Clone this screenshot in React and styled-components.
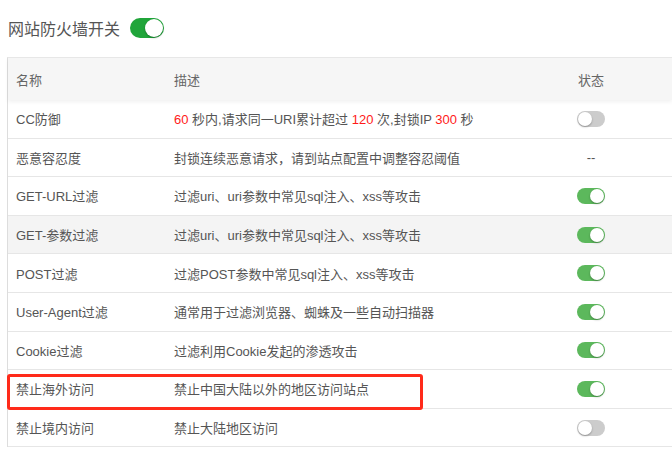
import styled, { createGlobalStyle } from 'styled-components';

const GlobalStyle = createGlobalStyle`
  html, body {
    margin: 0;
    padding: 0;
    background: #fff;
    overflow: hidden;
  }
  body {
    font-family: "Liberation Sans", "Noto Sans CJK SC", sans-serif;
    color: #555;
  }
`;

const rows = [
  { name: 'CC防御', desc: 'cc', on: false },
  { name: '恶意容忍度', desc: '封锁连续恶意请求，请到站点配置中调整容忍阈值', on: null },
  { name: 'GET-URL过滤', desc: '过滤uri、uri参数中常见sql注入、xss等攻击', on: true },
  { name: 'GET-参数过滤', desc: '过滤uri、uri参数中常见sql注入、xss等攻击', on: true, hover: true },
  { name: 'POST过滤', desc: '过滤POST参数中常见sql注入、xss等攻击', on: true },
  { name: 'User-Agent过滤', desc: '通常用于过滤浏览器、蜘蛛及一些自动扫描器', on: true },
  { name: 'Cookie过滤', desc: '过滤利用Cookie发起的渗透攻击', on: true },
  { name: '禁止海外访问', desc: '禁止中国大陆以外的地区访问站点', on: true, marked: true },
  { name: '禁止境内访问', desc: '禁止大陆地区访问', on: false },
];

export default function App(){
  return (
    <>
      <GlobalStyle />
      <Page>
        <TitleBar>
          <span>网站防火墙开关</span>
          <Switch $on $big />
        </TitleBar>
        <Table>
          <HeadRow>
            <NameCell>名称</NameCell>
            <DescCell>描述</DescCell>
            <StatusCell>状态</StatusCell>
            <Rest />
          </HeadRow>
          {rows.map((row) => (
            <Row key={row.name} $hover={row.hover}>
              <NameCell>{row.name}</NameCell>
              <DescCell>
                {row.desc === 'cc' ? (
                  <>
                    <Red>60</Red> 秒内,请求同一URI累计超过 <Red>120</Red> 次,封锁IP <Red>300</Red> 秒
                  </>
                ) : row.desc}
              </DescCell>
              <StatusCell>
                {row.on === null ? <Dash>--</Dash> : <Switch $on={row.on} />}
              </StatusCell>
              <Rest />
              {row.marked && <Mark />}
            </Row>
          ))}
        </Table>
      </Page>
    </>
  );
}

const Page = styled.div`
  padding: 0 0 0 7px;
  width: 665px;
`

const TitleBar = styled.div`
  display: flex;
  align-items: center;
  gap: 10px;
  height: 57px;
  padding-left: 1px;
  box-sizing: border-box;
  font-size: 16px;
  color: #555;
  position: relative;
  top: -1px;
`

const Table = styled.div`
  border-left: 1px solid #ddd;
  border-top: 1px solid #e8e8e8;
  font-size: 13px;
`

const HeadRow = styled.div`
  display: flex;
  align-items: center;
  height: 42px;
  background: #f6f6f6;
  color: #666;
  box-shadow: 0 2px 4px rgba(0,0,0,0.06);
  position: relative;
  z-index: 1;
`

const Row = styled.div`
  display: flex;
  align-items: center;
  height: 37.6px;
  border-bottom: 1px solid #e6e6e6;
  background: ${p => p.$hover ? '#f4f4f4' : '#fff'};
  position: relative;
`

const NameCell = styled.div`
  width: 158px;
  padding-left: 8px;
  flex-shrink: 0;
  white-space: nowrap;
`

const DescCell = styled.div`
  width: 371px;
  flex-shrink: 0;
  white-space: nowrap;
`

const StatusCell = styled.div`
  width: 92px;
  flex-shrink: 0;
  display: flex;
  justify-content: center;
`

const Rest = styled.div`
  flex: 1;
`

const Red = styled.span`
  color: #ff1a1a;
`

const Dash = styled.span`
  color: #555;
`

const Switch = styled.span`
  display: inline-block;
  position: relative;
  width: ${p => p.$big ? '34px' : '28px'};
  height: ${p => p.$big ? '20px' : '16px'};
  border-radius: 10px;
  background: ${p => p.$on ? (p.$big ? '#20a53a' : '#5cb85c') : '#ccc'};

  &::after{
    content: '';
    position: absolute;
    top: 1px;
    left: ${p => p.$on ? (p.$big ? '15px' : '13px') : '1px'};
    width: ${p => p.$big ? '18px' : '14px'};
    height: ${p => p.$big ? '18px' : '14px'};
    border-radius: 50%;
    background: #fff;
    box-shadow: 0 1px 2px rgba(0,0,0,0.3);
  }
`

const Mark = styled.div`
  position: absolute;
  left: -1px;
  top: 4px;
  width: 416px;
  height: 36px;
  border: 3px solid #ff2a1a;
  border-radius: 3px;
  box-sizing: border-box;
  pointer-events: none;
  z-index: 1;
`
